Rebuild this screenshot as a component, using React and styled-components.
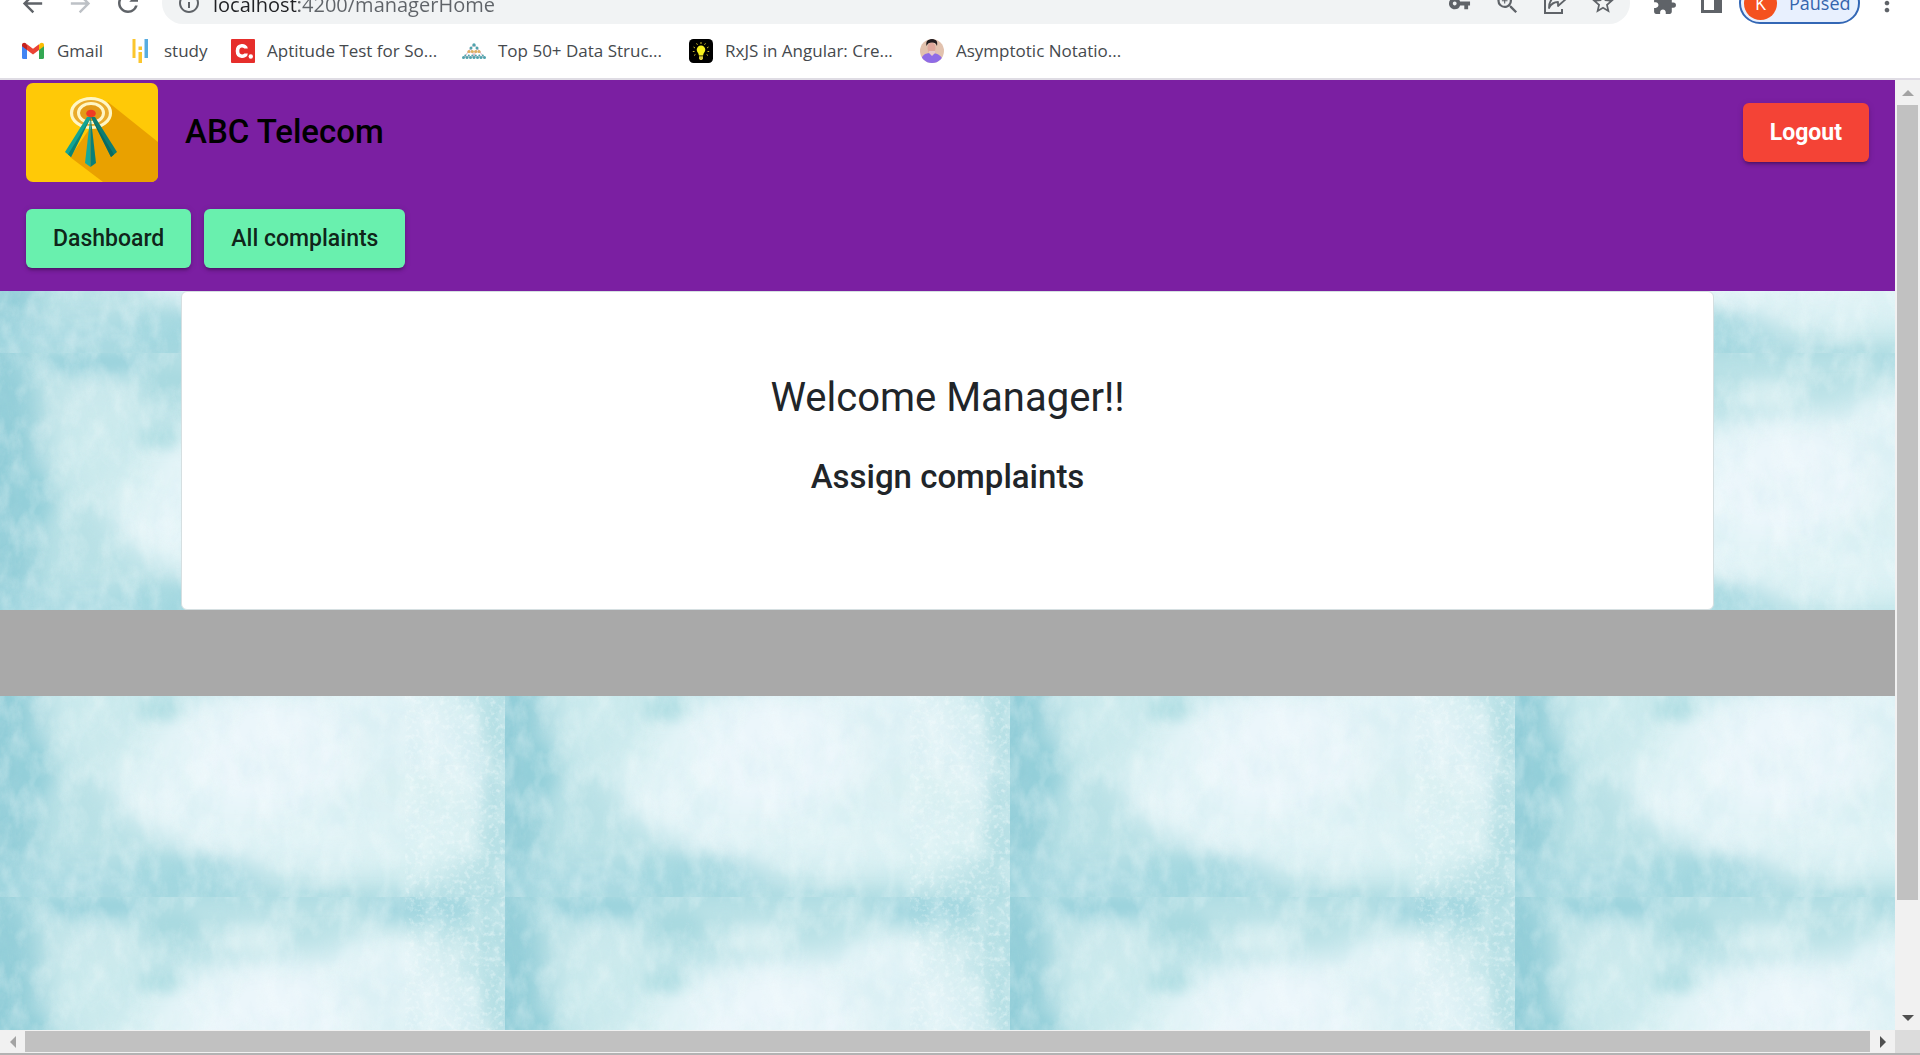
import React from "react";
import styled, { createGlobalStyle } from "styled-components";
import {
  MdArrowBack,
  MdArrowForward,
  MdRefresh,
  MdInfoOutline,
  MdVpnKey,
  MdZoomIn,
  MdStarBorder,
  MdExtension,
  MdMoreVert,
} from "react-icons/md";

/* ---------- wallpaper tile ---------- */

const blob = (cx, cy, rx, ry, fill, opacity) =>
  `<ellipse cx='${cx}' cy='${cy}' rx='${rx}' ry='${ry}' fill='${fill}' opacity='${opacity}'/>`;

const tileSvg = `<svg xmlns='http://www.w3.org/2000/svg' width='505' height='272' viewBox='0 0 505 272'>
<defs>
<filter id='soft' x='-50%' y='-50%' width='200%' height='200%'><feGaussianBlur stdDeviation='14'/></filter>
<filter id='small' x='-50%' y='-50%' width='200%' height='200%'><feGaussianBlur stdDeviation='7'/></filter>
<filter id='cloud' x='0' y='0' width='100%' height='100%'>
<feTurbulence type='fractalNoise' baseFrequency='0.04 0.025' numOctaves='5' seed='8'/>
<feColorMatrix values='0 0 0 0 0.50  0 0 0 0 0.77  0 0 0 0 0.82  1.6 0 0 0 -0.62'/>
</filter>
<filter id='light' x='0' y='0' width='100%' height='100%'>
<feTurbulence type='fractalNoise' baseFrequency='0.05 0.03' numOctaves='5' seed='21'/>
<feColorMatrix values='0 0 0 0 0.93  0 0 0 0 0.98  0 0 0 0 0.98  0 1.8 0 0 -0.72'/>
</filter>
<filter id='speckle' x='0' y='0' width='100%' height='100%'>
<feTurbulence type='fractalNoise' baseFrequency='0.2' numOctaves='3' seed='4'/>
<feColorMatrix values='0 0 0 0 0.94  0 0 0 0 0.99  0 0 0 0 0.99  0 3 0 0 -1.5'/>
</filter>
</defs>
<rect width='505' height='272' fill='#b9e1e6'/>
<g filter='url(#soft)'>
${blob(300, 150, 190, 92, "#e4f4f8", 1)}
${blob(390, 120, 95, 90, "#dff2f5", 0.9)}
${blob(410, 200, 75, 60, "#d9f0f3", 0.8)}
${blob(105, 95, 55, 60, "#d0ecef", 0.8)}
${blob(95, 45, 45, 22, "#cdeaed", 0.8)}
${blob(340, 215, 120, 40, "#dff2f5", 0.8)}
${blob(270, 130, 80, 60, "#ebf6fb", 1)}
${blob(5, 130, 34, 180, "#8dcbd6", 0.9)}
${blob(80, 258, 150, 18, "#a6d8e1", 0.8)}
${blob(190, 254, 75, 20, "#9ad3dd", 0.8)}
</g>
<g filter='url(#small)'>
${blob(95, 10, 55, 12, "#98d1dc", 0.9)}
${blob(170, 30, 28, 18, "#a5d8de", 0.8)}
${blob(255, 42, 35, 16, "#ddf1f4", 0.8)}
${blob(420, 12, 55, 14, "#9fd4de", 0.8)}
${blob(160, 84, 24, 10, "#a6d9df", 0.8)}
${blob(35, 145, 18, 30, "#92ced9", 0.7)}
${blob(185, 245, 45, 14, "#a2d7e0", 0.6)}
${blob(380, 65, 45, 20, "#e4f4f7", 0.8)}
${blob(495, 130, 9, 150, "#b0dde3", 0.7)}
${blob(250, 272, 300, 4, "#98d1db", 0.6)}
${blob(250, 0, 300, 4, "#98d1db", 0.5)}
</g>
<rect width='505' height='272' filter='url(#cloud)' opacity='0.25'/>
<rect width='505' height='272' filter='url(#light)' opacity='0.4'/>
<rect x='405' width='100' height='272' filter='url(#speckle)' opacity='0.4'/>
</svg>`;

const wallpaper = `url("data:image/svg+xml,${encodeURIComponent(tileSvg)
  .replace(/'/g, "%27")
  .replace(/\(/g, "%28")
  .replace(/\)/g, "%29")}")`;

/* ---------- browser frame ---------- */

const uiFont = `"Segoe UI", "Open Sans", "Noto Sans", sans-serif`;

const GlobalStyle = createGlobalStyle`
  *, *::before, *::after { box-sizing: border-box; }
  body { margin: 0; overflow: hidden; background: #fff; }
  button { font: inherit; border: 0; cursor: pointer; }
`;

const Window = styled.div`
  display: flex;
  flex-direction: column;
  height: 100vh;
`;

const AddressRow = styled.div`
  display: flex;
  align-items: flex-end;
  height: 24px;
  padding: 0 9px 0 8px;
  overflow: hidden;
  background: #fff;
`;

const ToolButton = styled.button`
  flex: none;
  display: flex;
  align-items: center;
  justify-content: center;
  width: 48px;
  height: 42px;
  padding: 0;
  background: none;
  color: ${(p) => (p.$muted ? "#bdc1c6" : "#5f6368")};
`;

const Omnibox = styled.div`
  flex: 1;
  display: flex;
  align-items: center;
  height: 42px;
  margin: 0 10px;
  padding: 0 3px 0 15px;
  border-radius: 21px;
  background: #f1f3f4;
  color: #5f6368;
`;

const UrlInput = styled.input`
  flex: 1;
  min-width: 0;
  height: 42px;
  margin-left: 12px;
  padding: 2px 0 0;
  border: 0;
  outline: 0;
  font: 20px/40px ${uiFont};
  color: #5f6368;
  background: linear-gradient(to right, #202124 86px, #5f6368 86px);
  -webkit-background-clip: text;
  background-clip: text;
  -webkit-text-fill-color: transparent;
`;

const Profile = styled.button`
  flex: none;
  display: flex;
  align-items: center;
  gap: 12px;
  width: 121px;
  height: 42px;
  margin: 0 3px;
  padding: 0 3px;
  border-radius: 21px;
  background: #e8f0fe;
  && {
    font: 18px/24px ${uiFont};
    color: #3564ad;
    border: 2px solid #3367b5;
  }
`;

const Avatar = styled.span`
  display: flex;
  align-items: center;
  justify-content: center;
  width: 33px;
  height: 33px;
  border-radius: 50%;
  background: #f4511e;
  color: #fff;
`;

const BookmarkBar = styled.nav`
  display: flex;
  align-items: center;
  height: 56px;
  padding-left: 21px;
  border-bottom: 2px solid #dfdce4;
  background: #fff;
`;

const Bookmark = styled.a`
  flex: none;
  display: flex;
  align-items: center;
  gap: 12px;
  width: ${(p) => p.$width}px;
  font: 17px/24px ${uiFont};
  color: #45494d;
  text-decoration: none;
  white-space: nowrap;
  svg { flex: none; }
`;

const Viewport = styled.div`
  flex: 1;
  min-height: 0;
  display: grid;
  grid-template-columns: 1fr 25px;
  grid-template-rows: 1fr 23px;
  border-bottom: 2px solid #b3b3b3;
`;

const ScrollTrack = styled.div`
  display: flex;
  flex-direction: ${(p) => (p.$vertical ? "column" : "row")};
  padding: ${(p) => (p.$vertical ? "0 2px" : "1px 0")};
  background: #f1f1f1;
`;

const ScrollArrow = styled.button`
  flex: none;
  display: flex;
  align-items: center;
  justify-content: center;
  width: ${(p) => (p.$vertical ? "auto" : "25px")};
  height: ${(p) => (p.$vertical ? "25px" : "auto")};
  padding: 0;
  background: none;
  color: ${(p) => (p.$idle ? "#a3a3a3" : "#505050")};
`;

const ScrollThumb = styled.div`
  flex: ${(p) => p.$grow};
  background: #c1c1c1;
`;

const ScrollRest = styled.div`
  flex: ${(p) => p.$grow};
`;

const Corner = styled.div`
  background: #dcdcdc;
`;

/* ---------- page ---------- */

const Page = styled.div`
  overflow: hidden;
  font-family: Roboto, sans-serif;
  background: #c8e8ec ${wallpaper} 0 1px / 505px 272px repeat;
`;

const Header = styled.header`
  padding: 3px 26px 23px;
  background: #7b1fa2;
`;

const Brand = styled.div`
  display: flex;
  align-items: center;
  height: 99px;
`;

const Title = styled.h1`
  flex: 1;
  margin: 0 0 2px 27px;
  font-size: 33px;
  font-weight: 500;
  line-height: 40px;
  color: #000;
`;

const Menu = styled.nav`
  display: flex;
  gap: 13px;
  margin-top: 27px;
`;

const RaisedButton = styled.button`
  && {
    height: 59px;
    padding: 0 27px;
    border-radius: 6px;
    font-size: 23px;
    font-weight: ${(p) => (p.$warn ? 700 : 500)};
    line-height: 59px;
    color: ${(p) => (p.$warn ? "#fff" : "rgba(0, 0, 0, 0.87)")};
    background: ${(p) => (p.$warn ? "#f44336" : "#69f0ae")};
    box-shadow: 0 4px 2px -3px rgba(0, 0, 0, 0.2), 0 3px 3px rgba(0, 0, 0, 0.14),
      0 1px 7px rgba(0, 0, 0, 0.12);
  }
`;

const Card = styled.main`
  margin: 0 181px;
  padding: 80px 24px 108px;
  border: 1px solid #d5dfe1;
  border-radius: 6px;
  background: #fff;
  color: #212529;
  text-align: center;
`;

const Welcome = styled.h2`
  margin: 0 0 29px;
  font-size: 40px;
  font-weight: 400;
  line-height: 52px;
`;

const SubHeading = styled.h3`
  margin: 0;
  font-size: 33px;
  font-weight: 500;
  line-height: 48px;
`;

const Footer = styled.footer`
  height: 86px;
  background: #a9a9a9;
`;

/* ---------- drawings ---------- */

const ShareIcon = () => (
  <svg width="24" height="24" viewBox="0 0 24 24" fill="none" stroke="currentColor" strokeWidth="2">
    <path d="M8 4H2v18h17v-4" />
    <path d="M15 1l8 7-8 7v-4c-4 0-7 2-9 6 0-7 4-11 9-12z" strokeWidth="1.800" strokeLinejoin="round" />
  </svg>
);

const SidePanelIcon = () => (
  <svg width="24" height="24" viewBox="0 0 24 24">
    <path d="M1 1h21v21H1zM4 4v15h10V4z" fill="currentColor" fillRule="evenodd" />
  </svg>
);

const GmailIcon = () => (
  <svg width="24" height="24" viewBox="0 0 24 24">
    <path d="M1 6v12.500Q1 20 2.500 20H6V9.500z" fill="#4285f4" />
    <path d="M23 6v12.500Q23 20 21.500 20H18V9.500z" fill="#34a853" />
    <path d="M18 5.500V11l5-3.800V6c0-2-2.200-3-3.800-1.700z" fill="#fbbc04" />
    <path d="M6 5.500V11L1 7.200V6c0-2 2.200-3 3.800-1.700z" fill="#c5221f" />
    <path d="M6 11V5.200l6 4.600 6-4.600V11l-6 4.600z" fill="#ea4335" />
  </svg>
);

const StudyIcon = () => (
  <svg width="24" height="24" viewBox="0 0 24 24">
    <path d="M4.500 0h3v19h-3zM10.500 13h3.500v11h-3.500zM10.500 7.500h3.500v3.500h-3.500z" fill="#fbc62d" />
    <path d="M16.500 0h3.500v19h-3.500z" fill="#57ace0" />
  </svg>
);

const CIcon = () => (
  <svg width="24" height="24" viewBox="0 0 24 24">
    <rect width="24" height="24" rx="1" fill="#e62e2b" />
    <path d="M15 9.500C15 6 6.500 5 6.500 12S15 18 15 14.500" fill="none" stroke="#fff" strokeWidth="3.600" />
    <circle cx="19.800" cy="17.500" r="2.200" fill="#fff" />
  </svg>
);

const PyramidIcon = () => (
  <svg width="24" height="24" viewBox="0 0 24 24">
    <path d="M12 5L2 18.500M12 5l10 13.500M5 13h14M2 18h20M8 9l5 9M16 9l-5 9" stroke="#d3a6b5" strokeWidth="0.800" fill="none" />
    <g fill="#4fa3ad">
      <circle cx="12" cy="6" r="1.700" />
      <circle cx="9" cy="9" r="1.500" />
      <circle cx="15" cy="9" r="1.500" />
      {[1.5, 5, 8.5, 12, 15.5, 19, 22.5].map((x) => (
        <circle key={x} cx={x} cy="18.500" r="1.500" />
      ))}
      {[3.3, 6.8, 10.3, 13.8, 17.3, 20.8].map((x) => (
        <circle key={x} cx={x} cy="16.500" r="1" />
      ))}
    </g>
    <g fill="#e0b060">
      {[7, 10.3, 13.7, 17].map((x) => (
        <circle key={x} cx={x} cy="12.500" r="1.500" />
      ))}
    </g>
  </svg>
);

const BulbIcon = () => (
  <svg width="24" height="24" viewBox="0 0 24 24">
    <rect width="24" height="24" rx="4.500" fill="#000" />
    <path d="M12 6.500a4.300 4.300 0 0 0-4.300 4.300c0 2.500 2 3.200 2.200 5.700h4.200c.2-2.500 2.200-3.200 2.200-5.700A4.300 4.300 0 0 0 12 6.500z" fill="#f7f01d" />
    <path d="M10 17.300h4v2.200l-1 1.500h-2l-1-1.500z" fill="#d9c93a" />
    <path d="M12 3v2M7.500 4.300l1 1.500M16.500 4.300l-1 1.500M4.500 8l1.500 1M19.500 8L18 9M3.800 12.500h1.700M18.500 12.500h1.700M5 16.500l1.400-1M19 16.500l-1.400-1" stroke="#c9b92e" strokeWidth="1" />
  </svg>
);

const PersonIcon = () => (
  <svg width="24" height="24" viewBox="0 0 24 24">
    <defs>
      <clipPath id="face">
        <circle cx="12" cy="12" r="12" />
      </clipPath>
    </defs>
    <g clipPath="url(#face)">
      <rect width="24" height="24" fill="#e2c2ae" />
      <path d="M1 24c0-8 4-10 10-10 7 0 12 3 12 10z" fill="#8f6be6" />
      <ellipse cx="11.500" cy="9" rx="4" ry="5.500" fill="#dfa79b" />
      <path d="M6.500 7C5.500 2 8 0 12 0s6 2 5 7c-1-2.500-2-3.500-5-3.500S7.500 4.500 6.500 7z" fill="#231c20" />
      <path d="M9 14l3 3 3-3v-2H9z" fill="#e7c8cb" />
    </g>
  </svg>
);

const TelecomLogo = styled(({ className }) => (
  <svg className={className} width="132" height="99" viewBox="0 0 132 99" role="img" aria-label="Antenna">
    <rect width="132" height="99" fill="#ffc907" />
    <path d="M82 19L132 59V99H77L44 74z" fill="#e9a100" />
    <ellipse cx="65" cy="30" rx="19.500" ry="14.500" fill="#e9ab2c" stroke="#fff6c4" strokeWidth="3.200" />
    <ellipse cx="65" cy="30" rx="12.500" ry="9.500" fill="#e29a17" stroke="#fff6c4" strokeWidth="3" />
    <path d="M61 34L39 69l6 5 20-40z" fill="#12a594" />
    <path d="M65 34L42 71.500l3 2.500z" fill="#0c8276" />
    <path d="M65 34l20 40 6-5-22-35z" fill="#0f7d72" />
    <path d="M65 34l20 40 3-2.500z" fill="#0a6a61" />
    <path d="M64.500 32L59 80l5.500 4z" fill="#14a99a" />
    <path d="M64.500 32L70 80l-5.500 4z" fill="#0b7f78" />
    <ellipse cx="65" cy="30.500" rx="4.800" ry="3.800" fill="#ef3b24" />
  </svg>
))`
  flex: none;
  display: block;
  border-radius: 7px;
`;

const arrowPaths = {
  up: "M0 9L6 3l6 6z",
  down: "M0 3l6 6 6-6z",
  left: "M9 0L3 6l6 6z",
  right: "M3 0l6 6-6 6z",
};

const Arrow = ({ dir }) => (
  <svg width="12" height="12" viewBox="0 0 12 12">
    <path d={arrowPaths[dir]} fill="currentColor" />
  </svg>
);

const bookmarks = [
  { label: "Gmail", Icon: GmailIcon, width: 107 },
  { label: "study", Icon: StudyIcon, width: 103 },
  { label: "Aptitude Test for So...", Icon: CIcon, width: 231 },
  { label: "Top 50+ Data Struc...", Icon: PyramidIcon, width: 227 },
  { label: "RxJS in Angular: Cre...", Icon: BulbIcon, width: 231 },
  { label: "Asymptotic Notatio...", Icon: PersonIcon, width: 231 },
];

export default function App() {
  return (
    <Window>
      <GlobalStyle />
      <AddressRow>
        <ToolButton aria-label="Back"><MdArrowBack size={29} /></ToolButton>
        <ToolButton aria-label="Forward" $muted><MdArrowForward size={29} /></ToolButton>
        <ToolButton aria-label="Reload"><MdRefresh size={30} /></ToolButton>
        <Omnibox>
          <MdInfoOutline size={24} />
          <UrlInput aria-label="Address" defaultValue="localhost:4200/managerHome" />
          <ToolButton aria-label="Passwords"><MdVpnKey size={23} /></ToolButton>
          <ToolButton aria-label="Zoom"><MdZoomIn size={27} /></ToolButton>
          <ToolButton aria-label="Share"><ShareIcon /></ToolButton>
          <ToolButton aria-label="Bookmark"><MdStarBorder size={26} /></ToolButton>
        </Omnibox>
        <ToolButton aria-label="Extensions"><MdExtension size={25} /></ToolButton>
        <ToolButton aria-label="Side panel"><SidePanelIcon /></ToolButton>
        <Profile>
          <Avatar>K</Avatar>
          Paused
        </Profile>
        <ToolButton aria-label="Menu"><MdMoreVert size={28} /></ToolButton>
      </AddressRow>
      <BookmarkBar>
        {bookmarks.map(({ label, Icon, width }) => (
          <Bookmark key={label} href="#" $width={width}>
            <Icon />
            {label}
          </Bookmark>
        ))}
      </BookmarkBar>
      <Viewport>
        <Page>
          <Header>
            <Brand>
              <TelecomLogo />
              <Title>ABC Telecom</Title>
              <RaisedButton $warn>Logout</RaisedButton>
            </Brand>
            <Menu>
              <RaisedButton>Dashboard</RaisedButton>
              <RaisedButton>All complaints</RaisedButton>
            </Menu>
          </Header>
          <Card>
            <Welcome>Welcome Manager!!</Welcome>
            <SubHeading>Assign complaints</SubHeading>
          </Card>
          <Footer />
        </Page>
        <ScrollTrack $vertical>
          <ScrollArrow $vertical $idle aria-label="Scroll up"><Arrow dir="up" /></ScrollArrow>
          <ScrollThumb $grow={795} />
          <ScrollRest $grow={105} />
          <ScrollArrow $vertical aria-label="Scroll down"><Arrow dir="down" /></ScrollArrow>
        </ScrollTrack>
        <ScrollTrack>
          <ScrollArrow $idle aria-label="Scroll left"><Arrow dir="left" /></ScrollArrow>
          <ScrollThumb $grow={1} />
          <ScrollArrow aria-label="Scroll right"><Arrow dir="right" /></ScrollArrow>
        </ScrollTrack>
        <Corner />
      </Viewport>
    </Window>
  );
}
